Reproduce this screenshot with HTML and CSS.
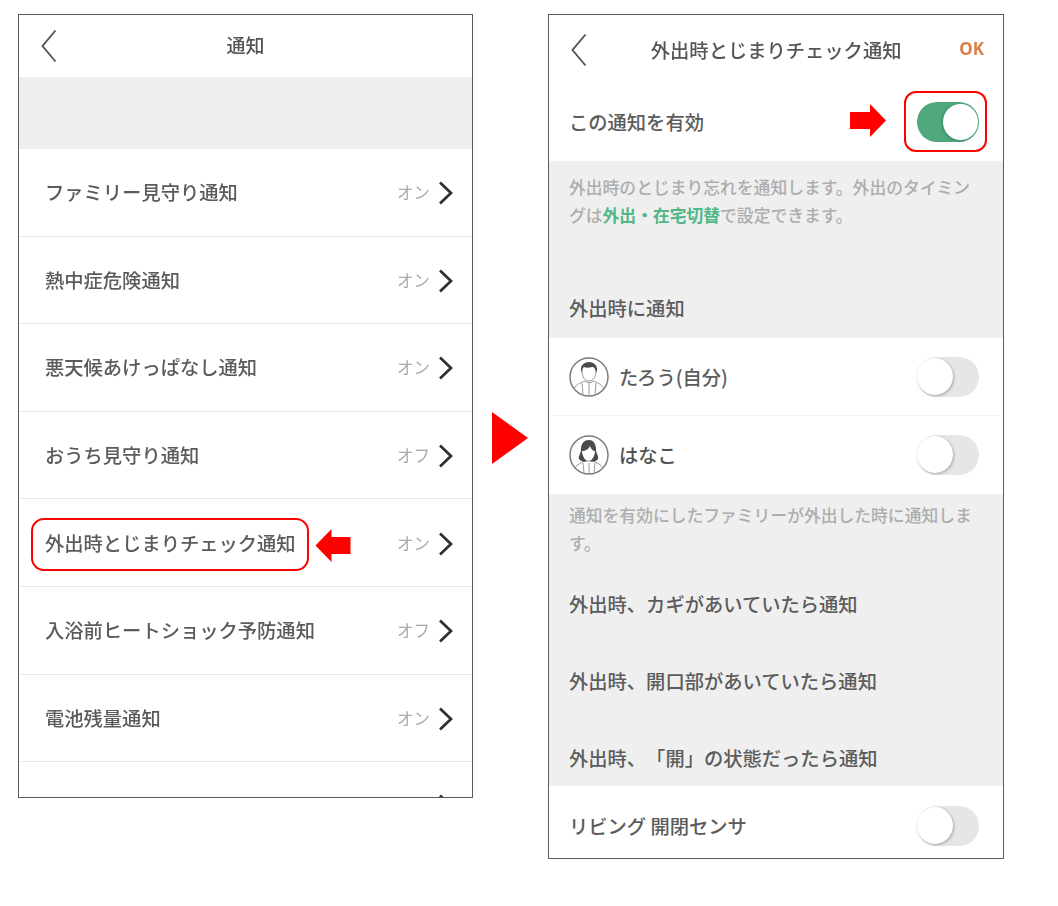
FILE: index.html
```html
<!DOCTYPE html>
<html lang="ja">
<head>
<meta charset="utf-8">
<title>通知設定</title>
<link rel="stylesheet" href="styles.css">
</head>
<body>
<main class="page">
  <section class="phone phone-left">
    <div class="content">
      <header class="nav nav-left">
        <svg class="back" viewBox="0 0 16 34"><path d="M14.500 1.500 1.500 17l13 15.500"/></svg>
        <h1 class="nav-title">通知</h1>
      </header>
      <div class="spacer"></div>
      <ul class="list">
        <li class="row"><span class="label">ファミリー見守り通知</span><span class="state">オン</span><svg class="chev" viewBox="0 0 15 24"><path d="M2 1.500 13 12 2 22.500"/></svg></li>
        <li class="row"><span class="label">熱中症危険通知</span><span class="state">オン</span><svg class="chev" viewBox="0 0 15 24"><path d="M2 1.500 13 12 2 22.500"/></svg></li>
        <li class="row"><span class="label">悪天候あけっぱなし通知</span><span class="state">オン</span><svg class="chev" viewBox="0 0 15 24"><path d="M2 1.500 13 12 2 22.500"/></svg></li>
        <li class="row"><span class="label">おうち見守り通知</span><span class="state">オフ</span><svg class="chev" viewBox="0 0 15 24"><path d="M2 1.500 13 12 2 22.500"/></svg></li>
        <li class="row"><span class="label">外出時とじまりチェック通知</span><span class="state">オン</span><svg class="chev" viewBox="0 0 15 24"><path d="M2 1.500 13 12 2 22.500"/></svg></li>
        <li class="row"><span class="label">入浴前ヒートショック予防通知</span><span class="state">オフ</span><svg class="chev" viewBox="0 0 15 24"><path d="M2 1.500 13 12 2 22.500"/></svg></li>
        <li class="row"><span class="label">電池残量通知</span><span class="state">オン</span><svg class="chev" viewBox="0 0 15 24"><path d="M2 1.500 13 12 2 22.500"/></svg></li>
        <li class="row"><span class="state"></span><svg class="chev" viewBox="0 0 15 24"><path d="M2 1.500 13 12 2 22.500"/></svg></li>
      </ul>
    </div>
    <div class="mark mark-row"></div>
    <svg class="arrow arrow-left" viewBox="0 0 35 33"><path d="M0 16.500 16 0v8h19v17H16v8z"/></svg>
  </section>

  <svg class="next" viewBox="0 0 36 52"><path d="M0 0 36 26 0 52z"/></svg>

  <section class="phone phone-right">
    <div class="content">
      <header class="nav nav-right">
        <svg class="back" viewBox="0 0 16 34"><path d="M14.500 1.500 1.500 17l13 15.500"/></svg>
        <h1 class="nav-title">外出時とじまりチェック通知</h1>
        <span class="ok">OK</span>
      </header>
      <div class="setting setting-main">
        <span class="label strong">この通知を有効</span>
        <span class="toggle on"></span>
      </div>
      <div class="band band-intro">
        <p class="note"><span class="note-line">外出時のとじまり忘れを通知します。外出のタイミン</span><span class="note-line">グは<b class="link">外出・在宅切替</b>で設定できます。</span></p>
        <h2 class="section">外出時に通知</h2>
      </div>
      <div class="setting setting-person divided">
        <svg class="avatar" viewBox="0 0 40 42">
          <circle cx="20" cy="21" r="19"/>
          <path class="line" d="M5 33c2-5 8-7 11-8 1 2 7 2 8 0 3 1 9 3 11 8M20 27v13M13 27l1 12M27 27l-1 12"/>
          <path class="line" d="M13 15c0 6 3 10 7 10s7-4 7-10"/>
          <path class="fill" d="M12 15c-1-6 4-9 8-9s9 3 8 9l-1 1c-1-4-2-5-4-5-3 1-6 1-8 0-1 1-2 2-2 5z"/>
        </svg>
        <span class="label strong">たろう(自分)</span>
        <span class="toggle"></span>
      </div>
      <div class="setting setting-person">
        <svg class="avatar" viewBox="0 0 40 42">
          <circle cx="20" cy="21" r="19"/>
          <path class="line" d="M6 34c2-4 8-6 10-7h8c2 1 8 3 10 7M20 29v11M14 29l1 10M26 29l-1 10"/>
          <path class="fill" d="M20 6c-6 0-8 5-8 9 0 5-3 7-2 10 2 3 6 3 8 2-3-2-5-6-5-10 3 0 7-2 8-5 1 3 3 5 5 5 0 4-2 8-5 10 2 1 6 1 8-2 1-3-2-5-2-10 0-4-2-9-7-9z"/>
        </svg>
        <span class="label strong dark">はなこ</span>
        <span class="toggle"></span>
      </div>
      <div class="band band-options">
        <p class="note"><span class="note-line">通知を有効にしたファミリーが外出した時に通知しま</span><span class="note-line">す。</span></p>
        <h2 class="section option-first">外出時、カギがあいていたら通知</h2>
        <h2 class="section option">外出時、開口部があいていたら通知</h2>
        <h2 class="section option">外出時、「開」の状態だったら通知</h2>
      </div>
      <div class="setting setting-last">
        <span class="label strong">リビング 開閉センサ</span>
        <span class="toggle"></span>
      </div>
    </div>
    <svg class="arrow arrow-right" viewBox="0 0 36 33"><path d="M36 16.500 20 0v8H0v17h20v8z"/></svg>
    <div class="mark mark-toggle"></div>
  </section>
</main>
</body>
</html>
```
FILE: styles.css
```css
* { box-sizing: border-box; }
html, body { margin: 0; background: #fff; }
body { font-family: "Noto Sans CJK JP", "Noto Sans", sans-serif; color: #555; text-spacing-trim: space-all; }
h1, h2, p, ul { margin: 0; padding: 0; font-size: inherit; font-weight: inherit; }
ul { list-style: none; }

.page { display: flex; align-items: flex-start; padding: 14px 0 0 18px; width: 1058px; height: 906px; overflow: hidden; }
.phone { position: relative; flex: none; border: 1px solid #5c5c5c; background: #fff; overflow: hidden; }
.phone-left { width: 455px; height: 784px; }
.phone-right { width: 456px; height: 845px; }
.content { filter: blur(0.45px); }

.next { flex: none; width: 36px; height: 52px; margin: 398px 20px 0 19px; fill: #f00; }

.nav { display: flex; align-items: center; position: relative; }
.nav-left { height: 62px; padding: 0 0 2px 22px; }
.nav-right { height: 69px; padding: 0 19px 2px 22px; }
.back { flex: none; width: 16px; height: 34px; fill: none; stroke: #555; stroke-width: 1.900; }
.nav-left .back { margin-top: 1px; }
.nav-right .back { margin-top: 2px; }
.nav-title { flex: 1; text-align: center; font-size: 19.200px; font-weight: 500; color: #555; line-height: 28px; }
.nav-left .nav-title { font-size: 19px; padding-right: 38px; }
.nav-right .nav-title { font-size: 19.300px; padding: 2px 0 0 6px; white-space: nowrap; }
.ok { flex: none; font-family: "Noto Sans", sans-serif; font-weight: 700; font-size: 17px; color: #dc7c49; }

.spacer { height: 72px; background: #efefef; }

.row { display: flex; align-items: center; height: 87.600px; padding: 0 19px 0 26px; border-bottom: 1px solid #e9e9e9; }
.row .label { flex: 1; font-size: 19.300px; font-weight: 500; color: #5b5b5b; white-space: nowrap; }
.state { margin-left: auto; font-size: 16.500px; color: #aaa; }
.chev { flex: none; width: 15px; height: 24px; margin: 2px 0 0 8px; fill: none; stroke: #2e2e2e; stroke-width: 2.700; }

.setting { display: flex; align-items: center; background: #fff; padding: 0 24px 0 20px; }
.setting .toggle { margin-left: auto; }
.setting-main { height: 77px; padding-bottom: 1px; }
.setting-person { height: 78px; }
.setting-last { height: 72px; padding-top: 7px; }
.divided { border-bottom: 1px solid #f4f4f4; }
.label.strong { font-size: 19.300px; font-weight: 500; color: #5c5c5c; white-space: nowrap; }
.label.dark { color: #505050; }

.band { background: #efefef; padding: 0 20px; }
.band-intro { height: 177px; padding-top: 13px; }
.band-options { height: 292px; padding-top: 8px; }
.note { font-size: 16.800px; line-height: 27.500px; color: #adadad; font-weight: 500; }
.note-line { display: block; white-space: nowrap; }
.link { color: #52b788; font-weight: 700; }
.section { font-size: 19.300px; font-weight: 500; line-height: 28px; color: #5c5c5c; white-space: nowrap; }
.band-intro .section { margin-top: 65px; }
.option-first { margin-top: 33px; }
.option { margin-top: 49px; }

.avatar { flex: none; width: 40px; height: 42px; margin-right: 10px; fill: #fff; stroke: #7c7c7c; stroke-width: 1.500; }
.avatar .line { fill: none; stroke: #999; stroke-width: 1; }
.avatar .fill { fill: #4a4a4a; stroke: none; }

.toggle { position: relative; flex: none; width: 62px; height: 40px; border-radius: 20px; background: #e6e6e6; }
.toggle::after { content: ""; position: absolute; top: 1px; left: 0; width: 36px; height: 37px; border-radius: 50%; background: #fff; box-shadow: 1px 1px 3px rgba(0,0,0,.28); }
.toggle.on { background: #4fa97d; }
.toggle.on::after { left: 26px; top: 2px; width: 35px; height: 36px; box-shadow: -1px 1px 3px rgba(0,0,0,.2); }

.mark { position: absolute; border: 2px solid #f00; background: transparent; }
.mark-row { left: 12px; top: 503px; width: 278px; height: 53px; border-radius: 13px; }
.mark-toggle { left: 355px; top: 76px; width: 83px; height: 61px; border-radius: 12px; }
.arrow { position: absolute; fill: #f00; }
.arrow-left { left: 296px; top: 514px; width: 36px; height: 33px; }
.arrow-right { left: 301px; top: 89px; width: 36px; height: 33px; }
```
